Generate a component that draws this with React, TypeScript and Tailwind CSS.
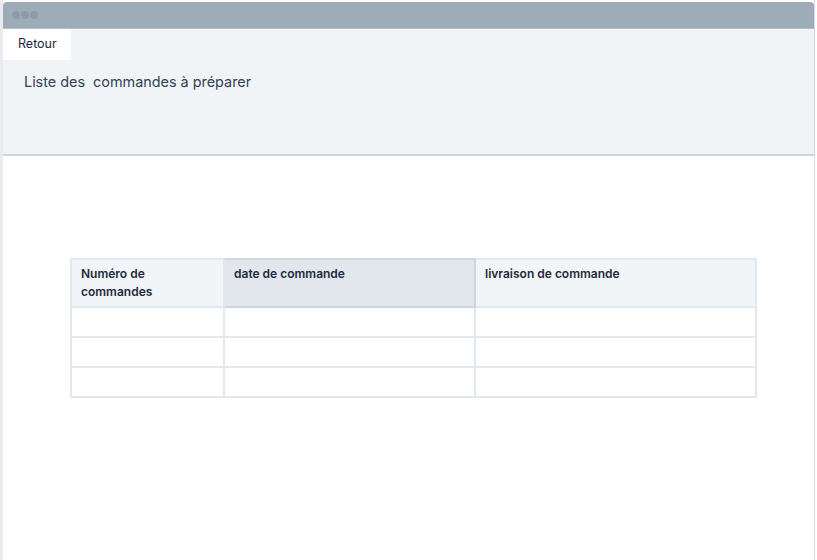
import React from "react";

export default function App() {
  const rows = [0, 1, 2];
  return (
    <div className="w-[817px] h-[560px] bg-white flex overflow-hidden" style={{ fontFamily: "Inter, 'Noto Sans', sans-serif" }}>
      <div className="w-[3px] bg-[#e8ecf0] shrink-0" />
      <div className="flex-1 flex flex-col pt-[2px] border-r border-[#d5dae0]">
        <div className="h-[27px] bg-[#9eacb8] rounded-t-[4px] flex items-center gap-[1px] pl-[9px] border-b border-[#b5c0ca]">
          <span className="w-[8px] h-[8px] rounded-full bg-[#8d9cab]" />
          <span className="w-[8px] h-[8px] rounded-full bg-[#8d9cab]" />
          <span className="w-[8px] h-[8px] rounded-full bg-[#8d9cab]" />
        </div>
        <div className="h-[127px] bg-[#f0f4f7] border-b-2 border-[#cdd6e0] flex flex-col">
          <div className="w-[68px] h-[31px] bg-white rounded-br-[3px] flex items-center pl-[15px] text-[12.5px] text-[#1e293b]">
            Retour
          </div>
          <div className="pl-[21px] pt-[11px] text-[14.4px] text-[#334155] whitespace-pre">
            Liste des  commandes à préparer
          </div>
        </div>
        <div className="flex-1 pt-[102px] pl-[67px]">
          <table className="w-[685px] border-collapse text-[12px] text-[#1e293b] table-fixed">
            <colgroup>
              <col className="w-[153px]" />
              <col className="w-[251px]" />
              <col className="w-[281px]" />
            </colgroup>
            <thead>
              <tr className="h-[48px]">
                <th className="bg-[#f1f5f8] border-2 border-[#e2e8f0] align-top text-left font-semibold px-[9px] pt-[5px] leading-[18px]">
                  Numéro de commandes
                </th>
                <th className="bg-[#e2e7ee] border-2 border-[#cfd5dd] align-top text-left font-semibold px-[9px] pt-[5px] leading-[18px]">
                  date de commande
                </th>
                <th className="bg-[#f1f5f8] border-2 border-[#e2e8f0] align-top text-left font-semibold px-[9px] pt-[5px] leading-[18px]">
                  livraison de commande
                </th>
              </tr>
            </thead>
            <tbody>
              {rows.map((r) => (
                <tr key={r} className="h-[30px]">
                  <td className="border-2 border-[#e2e8f0]" />
                  <td className="border-2 border-[#e2e8f0]" />
                  <td className="border-2 border-[#e2e8f0]" />
                </tr>
              ))}
            </tbody>
          </table>
        </div>
      </div>
      <div className="w-[2px] bg-white shrink-0" />
    </div>
  );
}
